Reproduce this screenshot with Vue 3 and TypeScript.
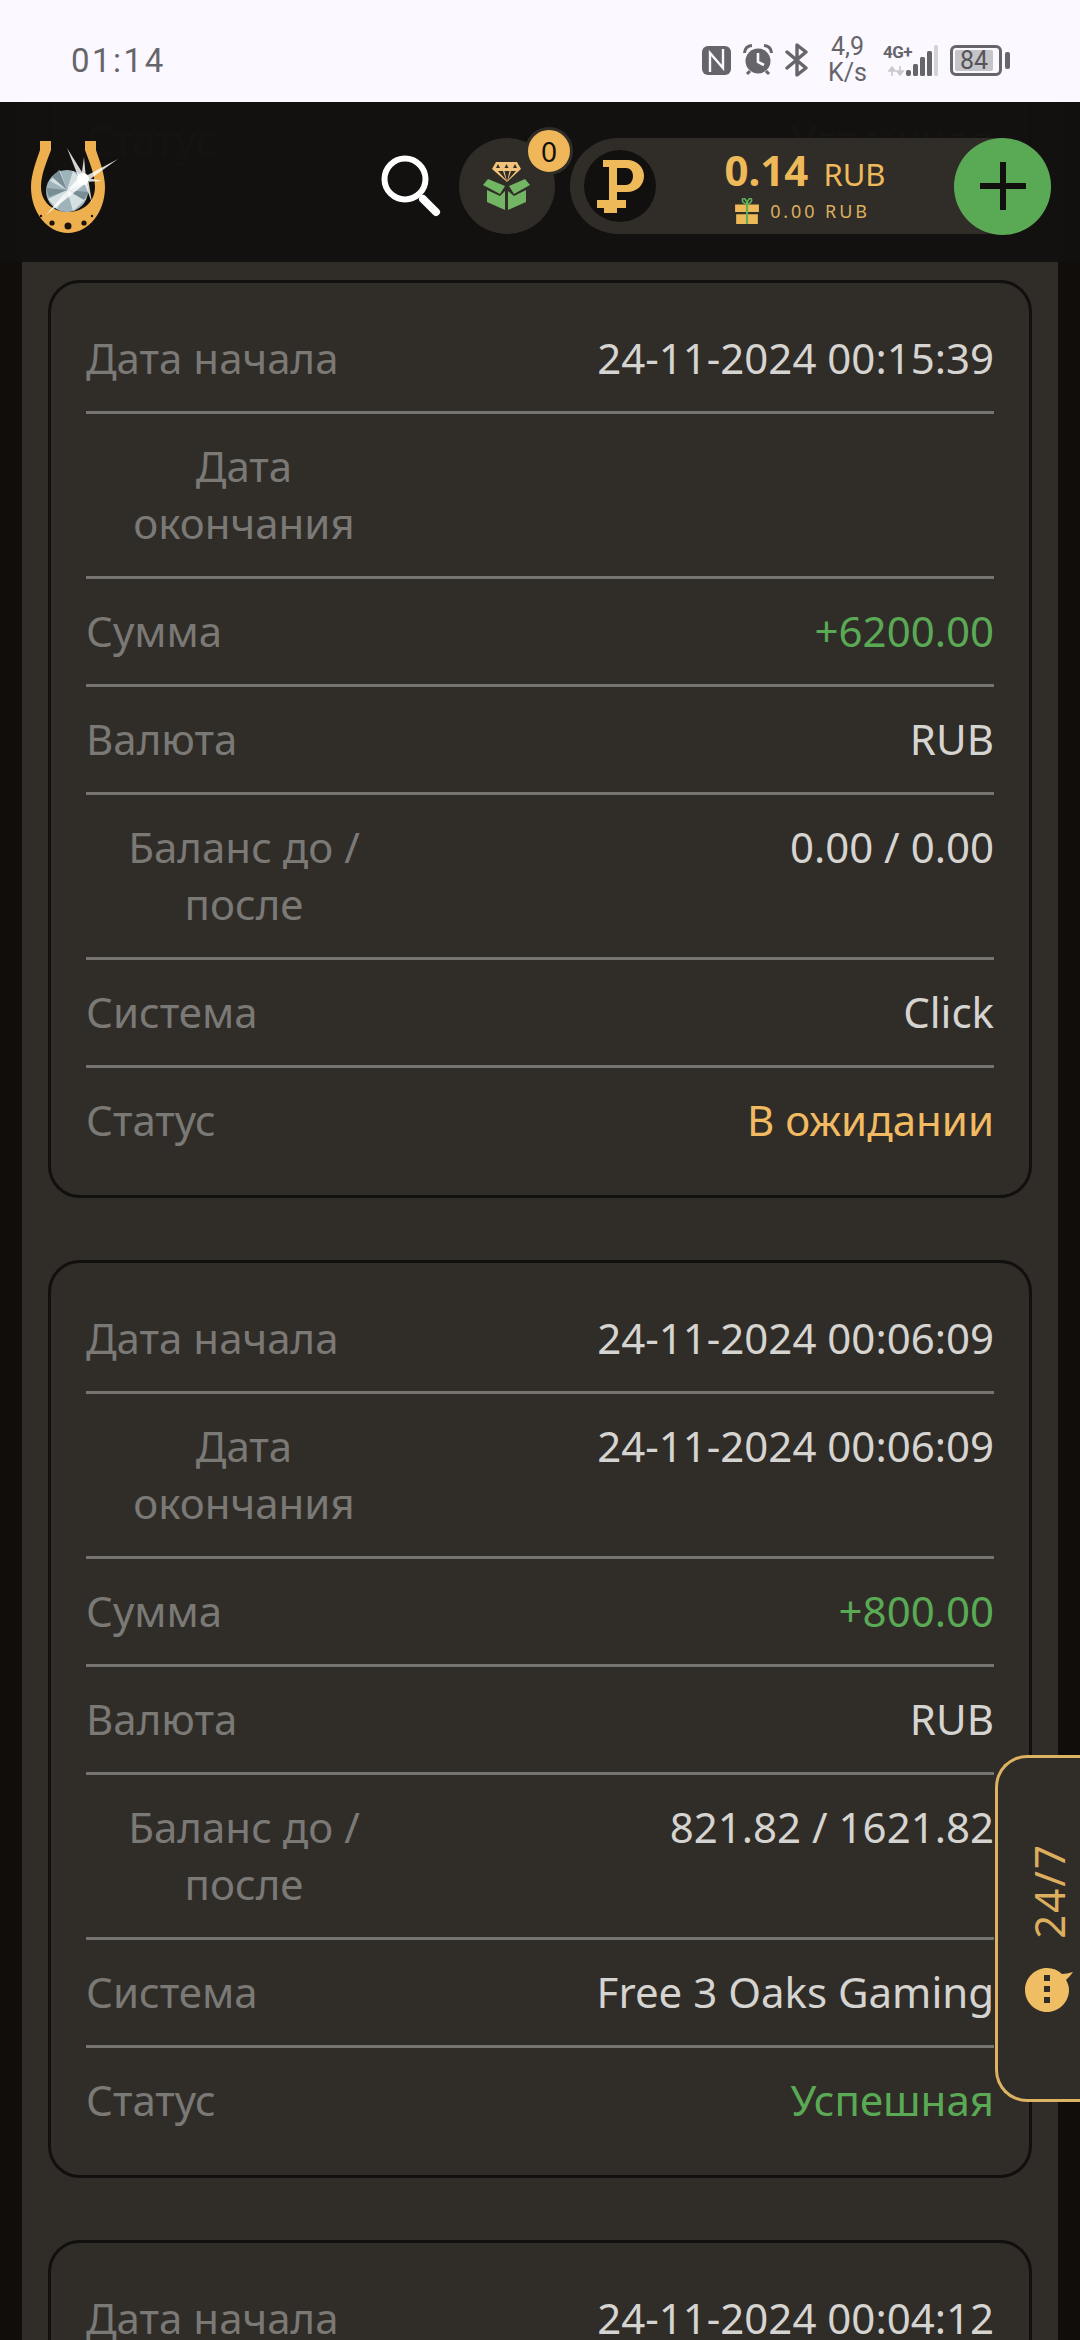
<script setup lang="ts">
interface Row {
  label: string;
  value: string;
  tone?: "plus" | "wait" | "ok";
}

const toneRows = (
  start: string,
  end: string,
  sum: string,
  balance: string,
  system: string,
  status: string,
  tone: "wait" | "ok",
): Row[] => [
  { label: "Дата начала", value: start },
  { label: "Дата окончания", value: end },
  { label: "Сумма", value: sum, tone: "plus" },
  { label: "Валюта", value: "RUB" },
  { label: "Баланс до / после", value: balance },
  { label: "Система", value: system },
  { label: "Статус", value: status, tone },
];

const cards: Row[][] = [
  [{ label: "Статус", value: "Успешная", tone: "ok" }],
  toneRows("24-11-2024 00:15:39", "", "+6200.00", "0.00 / 0.00", "Click", "В ожидании", "wait"),
  toneRows("24-11-2024 00:06:09", "24-11-2024 00:06:09", "+800.00", "821.82 / 1621.82", "Free 3 Oaks Gaming", "Успешная", "ok"),
  [{ label: "Дата начала", value: "24-11-2024 00:04:12" }],
];
</script>

<template>
  <div class="screen">
    <div class="statusbar">
      <span class="clock">01:14</span>
      <div class="sys">
        <svg width="29" height="29" viewBox="0 0 29 29">
          <rect width="29" height="29" rx="6" fill="#66656a" />
          <path d="M8 26V7l13 15V3" fill="none" stroke="#fcf8ff" stroke-width="2.4" />
        </svg>
        <svg width="30" height="32" viewBox="0 0 30 32">
          <circle cx="15" cy="17" r="12.5" fill="#66656a" />
          <path d="M15 9v9l6 3" fill="none" stroke="#fcf8ff" stroke-width="2.6" />
          <path d="M1.5 9Q2 2 9 1.5M28.5 9Q28 2 21 1.5M4 30l3-3M26 30l-3-3" stroke="#66656a" stroke-width="3" fill="none" />
        </svg>
        <svg width="24" height="34" viewBox="0 0 24 34">
          <path d="M2 9l19 16-9 7V2l9 7L2 25" fill="none" stroke="#66656a" stroke-width="3.4" stroke-linejoin="round" stroke-linecap="round" />
        </svg>
        <div class="speed"><span>4,9</span><span>K/s</span></div>
        <div class="signal">
          <span class="net">4G+</span>
          <svg width="55" height="31" viewBox="0 0 55 31">
            <path d="M6 26l3-4 3 4zM9 26v5M14 26l3 4 3-4zM17 21v6" fill="#c9c8cc" stroke="#c9c8cc" stroke-width="1.6" />
            <rect x="23" y="25" width="5" height="6" rx="2" fill="#66656a" />
            <rect x="30" y="19" width="5" height="12" rx="1.5" fill="#66656a" />
            <rect x="37" y="12" width="5" height="19" rx="1.5" fill="#66656a" />
            <rect x="44" y="6" width="5" height="25" rx="1.5" fill="#66656a" />
            <rect x="51" y="0" width="4" height="31" rx="1.5" fill="#d3d2d6" />
          </svg>
        </div>
        <div class="battery">
          <div class="cell"><span class="level">84</span></div>
          <span class="nub"></span>
        </div>
      </div>
    </div>

    <div class="viewport">
      <header class="topbar">
        <svg class="logo" width="100" height="110" viewBox="0 0 100 110">
          <path d="M20 10h11v9C28 28 21 42 21 56c0 15 12 25 27 25s27-10 27-25c0-14-7-28-10-37v-9h11v9c3 9 9 24 9 37 0 26-17 46-37 46S11 82 11 56c0-13 6-28 9-37z" fill="#eeb04f" />
          <circle cx="32" cy="92" r="2.6" fill="#1a1209" />
          <circle cx="48" cy="95" r="3.5" fill="#1a1209" />
          <circle cx="64" cy="92" r="2.6" fill="#1a1209" />
          <circle cx="21" cy="85" r="1.2" fill="#1a1209" />
          <circle cx="72" cy="85" r="1.2" fill="#1a1209" />
          <circle cx="47" cy="60" r="21" fill="#9fb4ba" />
          <path d="M30 50l17 9-7-20zM47 59l19-6-13-13zM47 59L28 68l9 10zM47 59l6 21 13-12z" fill="#d5e0e3" />
          <path d="M47 59L26 57l3 9zM47 59l21 2-4 8zM47 59l-8-20-7 7z" fill="#788d94" />
          <path d="M47 17L65 46l-5 4zM98 28L64 46l2 5zM26 84L60 45l6 7zM82 50L64 46v5zM72 72L63 48l5-1zM64 26l2 22h-5z" fill="#fff" opacity=".82" />
          <circle cx="63" cy="48" r="6" fill="#fff" />
        </svg>

        <svg class="search" width="60" height="62" viewBox="0 0 60 62">
          <circle cx="24" cy="24" r="20.5" fill="none" stroke="#fff" stroke-width="6" />
          <path d="M42 44l13 13" stroke="#fff" stroke-width="8" stroke-linecap="round" />
        </svg>

        <div class="giftbtn">
          <svg width="48" height="48" viewBox="0 0 48 48">
            <path d="M13 0H34L38 7 24 20 9 7z" fill="#f2c27a" />
            <path d="M15 2l2 4h-4zM23.500 2l2 4h-4zM32 2l2 4h-4zM15 9h5l3 9zM21.500 9h5L24 20zM28 9h5l-8 9z" fill="#302d29" />
            <path d="M0 23L5 17 22 24 17 32zM47 23L42 17 26 24 31 32z" fill="#72b562" />
            <path d="M4 28L17 34 22 29V48L4 40zM43 28L31 34 25 29V48L43 40z" fill="#72b562" />
          </svg>
          <span class="badge">0</span>
        </div>

        <div class="wallet">
          <div class="coin">
            <svg width="47" height="53" viewBox="0 0 47 53">
              <path d="M6 0H30C40 0 47 7 47 16S40 32 30 32H20V40H29V48H20V53H7V48H0V40H12V7H6ZM20 8V25H29C33 25 36 21 36 16S33 8 29 8Z" fill="#eeb959" fill-rule="evenodd" />
            </svg>
          </div>
          <div class="amounts">
            <div class="main"><b>0.14</b><span>RUB</span></div>
            <div class="bonus">
              <svg width="26" height="26" viewBox="0 0 24 24">
                <path d="M1 6h22v7H1zM2 15h20v9H2z" fill="#eeb959" />
                <path d="M12 6v18" stroke="#62ad57" stroke-width="2" />
                <path d="M12 6C9 5 7 3 8 1s4 1 4 5c0-4 3-7 4-5s-1 4-4 5z" fill="none" stroke="#62ad57" stroke-width="1.5" />
              </svg>
              <span>0.00 RUB</span>
            </div>
          </div>
          <div class="topup">
            <svg width="46" height="48" viewBox="0 0 46 48">
              <path d="M23 0v48M0 24h46" stroke="#12100e" stroke-width="6" />
            </svg>
          </div>
        </div>
      </header>

      <main class="panel">
        <section v-for="(card, i) in cards" :key="i" class="card">
          <div v-for="row in card" :key="row.label" class="row">
            <div class="label">{{ row.label }}</div>
            <div class="value" :class="row.tone">{{ row.value }}</div>
          </div>
        </section>
      </main>

      <aside class="support">
        <span class="support-text">24/7</span>
        <svg width="48" height="48" viewBox="0 0 48 48">
          <path d="M22 4c6 0 11 2 15 6 3 0 7-1 11-2-2 3-5 6-7 8 2 3 3 7 3 10 0 12-10 22-22 22S0 38 0 26 10 4 22 4z" fill="#efbd63" />
          <rect x="19" y="11" width="6" height="6" fill="#302d29" />
          <rect x="19" y="22" width="6" height="6" fill="#302d29" />
          <rect x="19" y="33" width="6" height="6" fill="#302d29" />
        </svg>
      </aside>
    </div>
  </div>
</template>

<style>
body {
  background: #12100e;
}
</style>

<style scoped>
.screen {
  width: 1080px;
  height: 2340px;
  overflow: hidden;
  background: #100d0b;
  font-family: "Noto Sans", "Open Sans", sans-serif;
}

.statusbar {
  height: 102px;
  background: #fcf8ff;
  display: flex;
  align-items: center;
  justify-content: space-between;
  padding: 18px 70px 0 71px;
  box-sizing: border-box;
  color: #66656a;
  font-family: Roboto, sans-serif;
}

.clock {
  font-size: 33px;
  letter-spacing: 2.5px;
}

.sys {
  display: flex;
  align-items: center;
  gap: 12px;
}

.speed {
  display: flex;
  flex-direction: column;
  align-items: center;
  font-size: 25px;
  line-height: 26px;
  margin: 0 4px 0 7px;
}

.signal {
  position: relative;
  width: 55px;
  display: flex;
}

.net {
  position: absolute;
  left: 0;
  top: -2px;
  font-size: 17px;
  font-weight: 700;
  line-height: 18px;
  letter-spacing: -0.5px;
}

.battery {
  display: flex;
  align-items: center;
  gap: 3px;
}

.cell {
  width: 52px;
  height: 31px;
  box-sizing: border-box;
  border: 3px solid #66656a;
  border-radius: 6px;
  padding: 2px;
  display: flex;
}

.level {
  width: 38px;
  background: #c5c4c8;
  border-radius: 2px;
  font-size: 25px;
  line-height: 21px;
  text-align: center;
  color: #55545a;
}

.nub {
  width: 5px;
  height: 17px;
  background: #66656a;
  border-radius: 2px;
}

.viewport {
  position: relative;
  height: 2238px;
  overflow: hidden;
}

.topbar {
  position: absolute;
  z-index: 2;
  top: 0;
  left: 0;
  right: 0;
  height: 160px;
  background: rgba(18, 16, 14, 0.975);
  display: flex;
  align-items: center;
  padding: 8px 29px 0 20px;
  box-sizing: border-box;
}

.logo {
  margin-right: auto;
}

.search {
  margin-right: 18px;
}

.giftbtn {
  position: relative;
  width: 96px;
  height: 96px;
  border-radius: 50%;
  background: #302d29;
  display: flex;
  align-items: center;
  justify-content: center;
  margin-right: 15px;
}

.badge {
  position: absolute;
  top: -11px;
  right: -18px;
  width: 42px;
  height: 42px;
  border-radius: 50%;
  border: 3px solid #302d29;
  background: #efb75a;
  color: #12100e;
  font-size: 28px;
  line-height: 42px;
  text-align: center;
}

.wallet {
  width: 481px;
  height: 96px;
  border-radius: 48px;
  background: #302d29;
  display: flex;
  align-items: center;
  padding-left: 14px;
  box-sizing: border-box;
}

.coin {
  width: 72px;
  height: 72px;
  border-radius: 50%;
  background: #12100e;
  display: flex;
  align-items: center;
  justify-content: center;
  flex: none;
}

.amounts {
  flex: 1;
  display: flex;
  flex-direction: column;
  align-items: center;
  color: #eeb959;
}

.main {
  display: flex;
  align-items: baseline;
  gap: 15px;
  font-size: 31px;
  line-height: 44px;
}

.main b {
  font-size: 42px;
}

.bonus {
  display: flex;
  align-items: center;
  gap: 10px;
  font-size: 18px;
  line-height: 24px;
  letter-spacing: 2.9px;
  margin: 2px 6px 0 0;
  color: #dcae5e;
}

.topup {
  width: 97px;
  height: 97px;
  border-radius: 50%;
  background: #5aaa55;
  display: flex;
  align-items: center;
  justify-content: center;
  flex: none;
}

.panel {
  margin: -100px 22px 0;
  padding: 0 26px;
  background: #302d29;
}

.card {
  border: 3px solid #12100e;
  border-radius: 32px;
  padding: 23px 35px 22px;
  margin-bottom: 62px;
}

.card:first-child {
  padding-top: 83px;
}

.row {
  display: flex;
  justify-content: space-between;
  align-items: flex-start;
  font-size: 42px;
  line-height: 57px;
  padding: 23px 0 25px;
  border-bottom: 3px solid #757470;
}

.row:last-child {
  border-bottom: none;
}

.label {
  max-width: 316px;
  text-align: center;
  color: #7a7976;
}

.value {
  text-align: right;
  color: #d6d4d0;
}

.value.plus,
.value.ok {
  color: #5aaa55;
}

.value.wait {
  color: #f2bb62;
}

.support {
  position: absolute;
  z-index: 3;
  right: 0;
  top: 1653px;
  width: 85px;
  height: 347px;
  box-sizing: border-box;
  background: #302d29;
  border: 3px solid #dcb263;
  border-right: none;
  border-radius: 32px 0 0 32px;
  display: flex;
  flex-direction: column;
  align-items: center;
  justify-content: center;
  gap: 26px;
  padding: 0 0 2px 20px;
  color: #dcae5e;
}

.support-text {
  writing-mode: vertical-rl;
  transform: rotate(180deg);
  font-size: 42px;
  line-height: 48px;
  letter-spacing: 2px;
}
</style>
